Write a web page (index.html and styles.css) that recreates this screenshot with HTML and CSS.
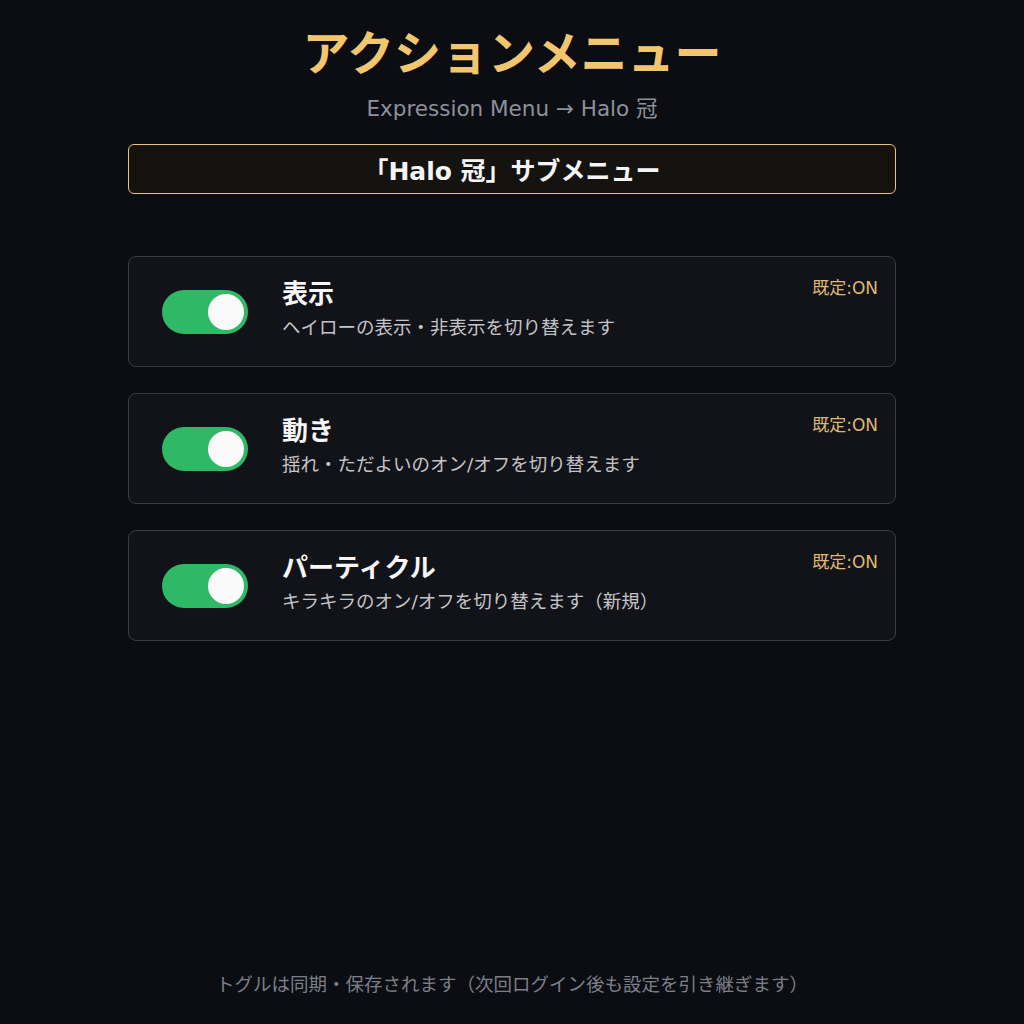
FILE: index.html
```html
<!DOCTYPE html>
<html lang="ja">
<head>
    <meta charset="UTF-8">
    <title>アクションメニュー</title>
    <link rel="stylesheet" href="styles.css">
</head>
<body>
    <div class="page">
        <h1>アクションメニュー</h1>
        <p class="path">Expression Menu → Halo 冠</p>

        <div class="submenu">「Halo 冠」サブメニュー</div>

        <div class="toggle-list">
            <div class="toggle-item">
                <span class="switch on"><span class="knob"></span></span>
                <div class="toggle-text">
                    <div class="toggle-title">表示</div>
                    <div class="toggle-desc">ヘイローの表示・非表示を切り替えます</div>
                </div>
                <span class="default">既定:ON</span>
            </div>
            <div class="toggle-item">
                <span class="switch on"><span class="knob"></span></span>
                <div class="toggle-text">
                    <div class="toggle-title">動き</div>
                    <div class="toggle-desc">揺れ・ただよいのオン/オフを切り替えます</div>
                </div>
                <span class="default">既定:ON</span>
            </div>
            <div class="toggle-item">
                <span class="switch on"><span class="knob"></span></span>
                <div class="toggle-text">
                    <div class="toggle-title">パーティクル</div>
                    <div class="toggle-desc">キラキラのオン/オフを切り替えます（新規）</div>
                </div>
                <span class="default">既定:ON</span>
            </div>
        </div>
    </div>

    <p class="footer">トグルは同期・保存されます（次回ログイン後も設定を引き継ぎます）</p>
</body>
</html>
```

FILE: styles.css
```css
body {
    margin: 0;
    height: 1024px;
    background-color: #0c0d12;
    font-family: "DejaVu Sans", "Noto Sans CJK JP", sans-serif;
    color: #f0f0f0;
    position: relative;
}

.page {
    width: 768px;
    margin: 0 auto;
    padding-top: 24px;
}

h1 {
    margin: 0;
    text-align: center;
    font-size: 47px;
    line-height: 60px;
    font-weight: bold;
    color: #f1c66e;
}

.path {
    margin: 12px 0 0;
    text-align: center;
    font-size: 21.5px;
    line-height: 26px;
    color: #8d919b;
}

.submenu {
    margin-top: 22px;
    height: 48px;
    border: 1px solid #e9c27f;
    border-radius: 6px;
    background-color: #14130f;
    display: flex;
    align-items: center;
    justify-content: center;
    font-size: 25px;
    font-weight: bold;
    color: #f4f4f4;
}

.toggle-list {
    margin-top: 62px;
    display: flex;
    flex-direction: column;
    gap: 26px;
}

.toggle-item {
    height: 109px;
    border: 1px solid #3a3c43;
    border-radius: 8px;
    background-color: #121318;
    display: flex;
    align-items: center;
    padding: 0 17px 0 33px;
    position: relative;
}

.switch {
    width: 86px;
    height: 44px;
    border-radius: 22px;
    background-color: #2fb866;
    display: flex;
    align-items: center;
    justify-content: flex-end;
    padding-right: 4px;
    box-sizing: border-box;
    flex-shrink: 0;
}

.knob {
    width: 36px;
    height: 36px;
    border-radius: 50%;
    background-color: #fafafa;
}

.toggle-text {
    margin-left: 34px;
    margin-top: -6px;
}

.toggle-title {
    font-size: 26px;
    font-weight: bold;
    line-height: 32px;
    color: #f6f6f6;
}

.toggle-desc {
    margin-top: 6px;
    font-size: 18.5px;
    line-height: 24px;
    color: #c4c4c8;
}

.default {
    position: absolute;
    top: 17px;
    right: 17px;
    font-size: 17px;
    color: #dfb674;
}

.footer {
    position: absolute;
    left: 0;
    right: 0;
    top: 972px;
    margin: 0;
    text-align: center;
    font-size: 18.5px;
    line-height: 26px;
    color: #7b7f89;
}
```
